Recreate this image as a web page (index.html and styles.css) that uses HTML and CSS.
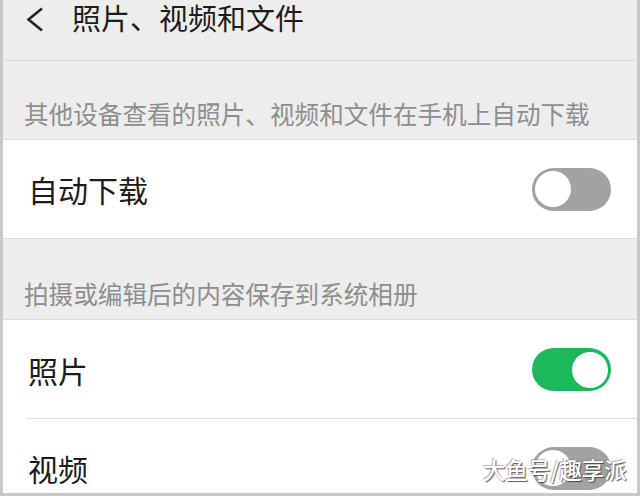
FILE: index.html
```html
<!DOCTYPE html>
<html lang="zh-CN">
<head>
<meta charset="utf-8">
<link rel="stylesheet" href="styles.css">
</head>
<body>
<div class="frame">
  <header class="topbar">
    <svg class="back" width="20" height="26" viewBox="0 0 20 26">
      <path d="M17 1.5 L3.5 12.5 L17 23.5" fill="none" stroke="#222" stroke-width="2.6" stroke-linejoin="miter"/>
    </svg>
    <h1 class="title">照片、视频和文件</h1>
  </header>
  <div class="group-title">其他设备查看的照片、视频和文件在手机上自动下载</div>
  <div class="group">
    <div class="row">
      <span class="label">自动下载</span>
      <span class="switch"><span class="knob"></span></span>
    </div>
  </div>
  <div class="group-title tall">拍摄或编辑后的内容保存到系统相册</div>
  <div class="group">
    <div class="row divided">
      <span class="label">照片</span>
      <span class="switch on"><span class="knob"></span></span>
    </div>
    <div class="row">
      <span class="label">视频</span>
      <span class="switch"><span class="knob"></span></span>
    </div>
  </div>
  <div class="watermark">大鱼号/趣享派</div>
</div>
</body>
</html>
```
FILE: styles.css
```css
* { box-sizing: border-box; }
html, body { margin: 0; padding: 0; background: #fff; }
body { font-family: "Noto Sans CJK SC", "Noto Sans", sans-serif; }

.frame {
  position: relative;
  width: 640px;
  height: 496px;
  overflow: hidden;
  background: #ededed;
  border-left: 3px solid #c8c8c8;
  border-right: 3px solid #c8c8c8;
  border-bottom: 3px solid #c8c8c8;
  display: flex;
  flex-direction: column;
}

.topbar {
  flex: none;
  height: 61px;
  border-bottom: 1px solid #d9d9d9;
  display: flex;
  align-items: flex-start;
  padding-left: 22px;
}
.back { margin-top: 7px; flex: none; }
.title {
  margin: 0 0 0 27px;
  font-size: 29px;
  font-weight: 400;
  line-height: 35px;
  color: #1c1c1c;
}

.group-title {
  flex: none;
  height: 79px;
  padding: 37px 0 0 21px;
  font-size: 24.6px;
  line-height: 30px;
  color: #8e8e8e;
  border-bottom: 1px solid #dcdcdc;
  white-space: nowrap;
}
.group-title.tall { height: 81px; padding-top: 39px; }

.group { background: #fff; flex: none; }
.row {
  position: relative;
  height: 99px;
  display: flex;
  align-items: center;
  justify-content: space-between;
  padding: 0 26px 0 25px;
  border-bottom: 1px solid #dcdcdc;
}
.row.divided { border-bottom: none; }
.row.divided::after {
  content: "";
  position: absolute;
  left: 23px;
  right: 0;
  bottom: 0;
  height: 1px;
  background: #dedede;
}
.label {
  font-size: 30px;
  line-height: 40px;
  color: #1c1c1c;
}

.switch {
  position: relative;
  width: 79px;
  height: 43px;
  border-radius: 22px;
  background: #a2a2a2;
  display: flex;
  align-items: center;
  padding: 0 3px;
  flex: none;
}
.switch .knob {
  width: 36px;
  height: 36px;
  border-radius: 50%;
  background: #fff;
}
.switch.on { background: #1cb95c; justify-content: flex-end; }

.watermark {
  position: absolute;
  left: 480px;
  top: 454px;
  font-size: 22.5px;
  line-height: 30px;
  font-weight: 500;
  color: #fff;
  text-shadow: 1px 1px 1px rgba(50,50,50,0.8), -1px -1px 1px rgba(110,110,110,0.5);
  white-space: nowrap;
}
```
